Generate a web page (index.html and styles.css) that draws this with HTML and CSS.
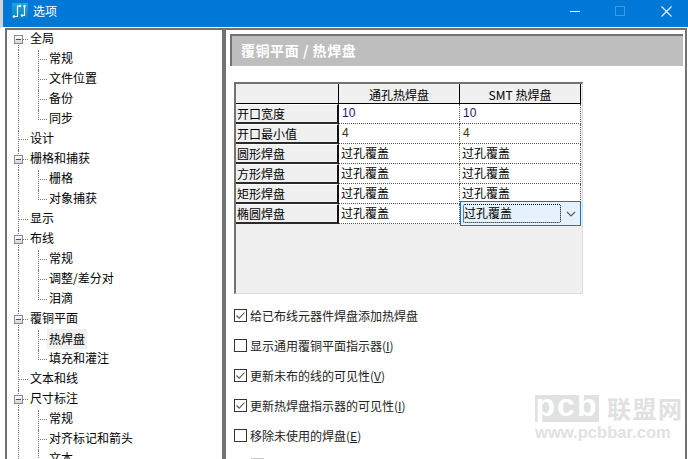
FILE: index.html
```html
<!DOCTYPE html>
<html lang="zh-CN">
<head>
<meta charset="utf-8">
<title>选项</title>
<link rel="stylesheet" href="styles.css">
</head>
<body>
<div class="window">
  <header class="titlebar">
    <svg class="app-icon" viewBox="0 0 16 16" width="16" height="16">
      <defs><linearGradient id="tile" x1="0" y1="0" x2="0" y2="1"><stop offset="0" stop-color="#1aa6e0"/><stop offset="1" stop-color="#0b7fc0"/></linearGradient></defs>
      <rect width="16" height="16" fill="url(#tile)"/>
      <path d="M2 13.5H5.5V3H7.5M10 12.5H12.5V3" fill="none" stroke="#fff" stroke-width="1.2"/>
      <circle cx="2" cy="13.5" r="1.2" fill="#fff"/><circle cx="8" cy="3" r="1.2" fill="#fff"/><circle cx="10" cy="12.5" r="1.2" fill="#fff"/><circle cx="12.5" cy="3" r="1.2" fill="#fff"/>
    </svg>
    <span class="title">选项</span>
    <div class="controls">
      <svg class="ctl" viewBox="0 0 46 27" width="46" height="27"><path d="M20 11.5H30" stroke="#fff" fill="none"/></svg>
      <svg class="ctl" viewBox="0 0 46 27" width="46" height="27"><rect x="19.5" y="6.5" width="9" height="9" fill="none" stroke="#3d9ae2"/></svg>
      <svg class="ctl" viewBox="0 0 46 27" width="46" height="27"><path d="M19.5 6.5L29.5 16.5M29.5 6.5L19.5 16.5" stroke="#fff" fill="none" stroke-width="1.1"/></svg>
    </div>
  </header>
  <div class="body">
    <nav class="tree">
      <div class="node root open"><i class="box"></i><span>全局</span></div>
      <div class="node child"><span>常规</span></div>
      <div class="node child"><span>文件位置</span></div>
      <div class="node child"><span>备份</span></div>
      <div class="node child last"><span>同步</span></div>
      <div class="node root"><span>设计</span></div>
      <div class="node root open"><i class="box"></i><span>栅格和捕获</span></div>
      <div class="node child"><span>栅格</span></div>
      <div class="node child last"><span>对象捕获</span></div>
      <div class="node root"><span>显示</span></div>
      <div class="node root open"><i class="box"></i><span>布线</span></div>
      <div class="node child"><span>常规</span></div>
      <div class="node child"><span>调整/差分对</span></div>
      <div class="node child last"><span>泪滴</span></div>
      <div class="node root open"><i class="box"></i><span>覆铜平面</span></div>
      <div class="node child"><span class="selected">热焊盘</span></div>
      <div class="node child last"><span>填充和灌注</span></div>
      <div class="node root"><span>文本和线</span></div>
      <div class="node root open"><i class="box"></i><span>尺寸标注</span></div>
      <div class="node child"><span>常规</span></div>
      <div class="node child"><span>对齐标记和箭头</span></div>
      <div class="node child"><span>文本</span></div>
    </nav>
    <main class="panel">
      <h1 class="heading">覆铜平面 / 热焊盘</h1>
      <div class="grid-wrap">
        <div class="grid">
          <div class="corner"></div><div class="colhead">通孔热焊盘</div><div class="colhead">SMT 热焊盘</div>
          <div class="rowhead">开口宽度</div><div class="cell num a">10</div><div class="cell num a">10</div>
          <div class="rowhead">开口最小值</div><div class="cell num b">4</div><div class="cell num b">4</div>
          <div class="rowhead">圆形焊盘</div><div class="cell">过孔覆盖</div><div class="cell">过孔覆盖</div>
          <div class="rowhead">方形焊盘</div><div class="cell">过孔覆盖</div><div class="cell">过孔覆盖</div>
          <div class="rowhead">矩形焊盘</div><div class="cell">过孔覆盖</div><div class="cell">过孔覆盖</div>
          <div class="rowhead">椭圆焊盘</div><div class="cell">过孔覆盖</div>
          <div class="cell combo"><span class="combo-text">过孔覆盖</span><svg viewBox="0 0 10 6" width="10" height="6"><path d="M1 1L5 5L9 1" fill="none" stroke="#555" stroke-width="1.1"/></svg></div>
        </div>
      </div>
      <div class="checks">
        <label class="check"><i class="cb"><svg viewBox="0 0 11 11" width="11" height="11"><path d="M1.5 5.5L4.2 8.2L9.5 2.5" fill="none" stroke="#555" stroke-width="1.1"/></svg></i>给已布线元器件焊盘添加热焊盘</label>
        <label class="check"><i class="cb"></i><span>显示通用覆铜平面指示器(<u>I</u>)</span></label>
        <label class="check"><i class="cb"><svg viewBox="0 0 11 11" width="11" height="11"><path d="M1.5 5.5L4.2 8.2L9.5 2.5" fill="none" stroke="#555" stroke-width="1.1"/></svg></i><span>更新未布的线的可见性(<u>V</u>)</span></label>
        <label class="check"><i class="cb"><svg viewBox="0 0 11 11" width="11" height="11"><path d="M1.5 5.5L4.2 8.2L9.5 2.5" fill="none" stroke="#555" stroke-width="1.1"/></svg></i><span>更新热焊盘指示器的可见性(<u>I</u>)</span></label>
        <label class="check"><i class="cb"></i><span>移除未使用的焊盘(<u>E</u>)</span></label>
      </div>
      <div class="stub"></div>
    </main>
  </div>
  <div class="watermark">
    <div class="wm-top"><span class="wm-pcb">pcb</span><span class="wm-cn">联盟网</span></div>
    <div class="wm-url">www.pcbbar.com</div>
  </div>
</div>
</body>
</html>
```

FILE: styles.css
```css
* { box-sizing: border-box; }
html, body { margin: 0; padding: 0; }
body {
  width: 688px; height: 459px; overflow: hidden; background: #fff;
  font-family: "Noto Sans CJK SC", "Liberation Sans", sans-serif;
  font-size: 12px; color: #000;
}
.window { position: relative; width: 688px; height: 459px; overflow: hidden; }

.titlebar {
  height: 28px; background: #0078d7; border-bottom: 1px solid #fff; border-left: 3px solid #d4d4d4;
  display: flex; align-items: center; padding: 0 0 5px 9px; color: #fff;
}
.app-icon { flex: none; }
.title { margin-left: 5px; font-size: 12px; line-height: 16px; }
.controls { margin-left: auto; display: flex; align-self: flex-start; height: 27px; }
.ctl { display: block; }

.body { display: flex; height: 431px; padding-left: 5px; overflow: hidden; }
.tree {
  width: 219px; flex: none; height: 440px; background: #fff;
  border: 2px solid #727272; border-bottom: 0; overflow: hidden;
}
.node { position: relative; height: 20px; line-height: 16px; white-space: nowrap; }
.root { padding-left: 23px; }
.child { padding-left: 42px; }
.root::before {
  content: ""; position: absolute; left: 11px; top: 0; bottom: 0;
  border-left: 1px dotted #777;
}
.root::after {
  content: ""; position: absolute; left: 11px; top: 9px; width: 10px;
  border-top: 1px dotted #777;
}
.child::before {
  content: ""; position: absolute; left: 31px; top: 0; height: 20px;
  border-left: 1px dotted #777;
}
.child.last::before { height: 10px; }
.child::after {
  content: ""; position: absolute; left: 31px; top: 9px; width: 9px;
  border-top: 1px dotted #777;
}
.child { background: linear-gradient(#777 50%, transparent 50%) 11px 0 / 1px 2px repeat-y; }
.node:first-child::before { top: 9px; }
.box {
  position: absolute; z-index: 1; left: 7px; top: 5px; width: 9px; height: 9px;
  background: linear-gradient(#fff, #d5d5d5); border: 1px solid #8a8a8a;
}
.box::after { content: ""; position: absolute; left: 1px; top: 3px; width: 5px; height: 1px; background: #3a4f8a; }
.selected { display: inline-block; background: #f0f0f0; padding: 2px; margin: -1px 0 0 -2px; }

.panel {
  flex: none; width: 463px; height: 440px; margin-left: 0;
  border: 2px solid #727272; border-bottom: 0; padding: 4px 2px 0 4px;
}
.heading {
  margin: 0; height: 32px; background: #bebebe; color: #fff;
  border-top: 2px solid #727272; border-left: 2px solid #727272;
  font-size: 14px; font-weight: 700; line-height: 28px; padding-left: 9px; letter-spacing: .55px;
}
.grid-wrap {
  margin: 16px 0 0 4px; width: 349px; height: 212px; background: #f0f0f0;
  border-top: 2px solid #727272; border-left: 2px solid #727272;
  border-right: 1px solid #dcdcdc; border-bottom: 1px solid #dcdcdc;
}
.grid { display: grid; grid-template-columns: 103px 121px 121px; grid-auto-rows: 20px; }
.corner, .colhead { background: #f0f0f0; border-right: 1px solid #000; border-bottom: 1px solid #000; }
.colhead { text-align: center; line-height: 22px; }
.rowhead {
  background: #f0f0f0; border-right: 2px solid #111; border-bottom: 2px solid #2a2a2a;
  border-top: 1px solid #fff; padding-left: 1px; line-height: 17px;
}
.cell { background: #fff; border-right: 1px dotted #555; border-bottom: 1px dotted #555; padding-left: 2px; line-height: 18px; overflow: hidden; }
.num { padding-left: 3px; font-family: "Liberation Sans", sans-serif; }
.a { color: #1a1a5a; }
.b { color: #4a3000; }
.combo {
  display: flex; align-items: center; border: 1px solid #0078d7; background: #e5f1fb;
  height: 25px; margin: -3px 0 0 0; padding: 0 4px 0 2px; position: relative; z-index: 1;
}
.combo-text { flex: 1; height: 19px; border: 1px dotted #000; border-radius: 2px; line-height: 16px; padding-left: 0; margin-right: 5px; }

.checks { margin: 6px 0 0 4px; display: flex; flex-direction: column; }
.check { display: flex; align-items: center; height: 30px; color: #222; }
.cb { width: 13px; height: 13px; flex: none; border: 1px solid #333; background: #fff; margin-right: 3px; }
.cb svg { display: block; }
.stub { width: 13px; height: 2px; background: #ccc; margin: 8px 0 0 21px; }

.watermark { position: absolute; left: 535px; top: 395px; color: #e0e2e2; width: 150px; }
.wm-top { display: flex; align-items: flex-start; }
.wm-pcb {
  width: 64px; height: 27px; background: #e0e2e2; color: #fff; font-family: "Liberation Sans", sans-serif;
  font-weight: 700; font-size: 32px; line-height: 20px; text-align: center; letter-spacing: 2px; white-space: nowrap;
}
.wm-cn { margin-left: 8px; font-size: 24px; line-height: 26px; font-weight: 700; letter-spacing: 1.5px; white-space: nowrap; }
.wm-url { font-family: "Liberation Sans", sans-serif; font-weight: 700; font-size: 16.6px; line-height: 19px; margin-top: 1px; white-space: nowrap; }
```
